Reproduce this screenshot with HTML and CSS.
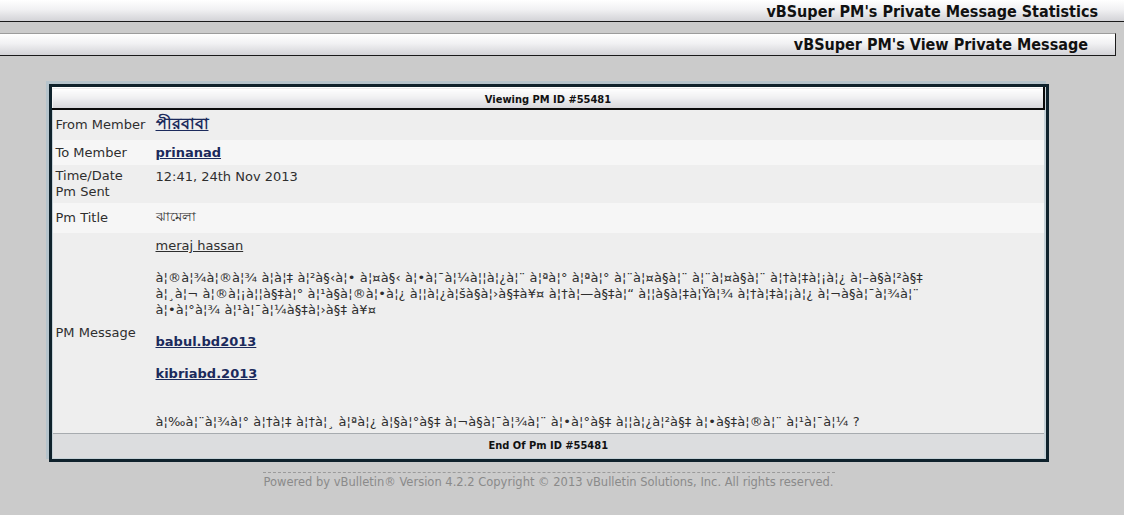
FILE: index.html
```html
<!DOCTYPE html>
<html>
<head>
<meta charset="utf-8">
<title>vBSuper PM's View Private Message</title>
<link rel="stylesheet" href="styles.css">
</head>
<body>
<div class="bar bar-top">vBSuper PM's Private Message Statistics</div>
<div class="bar bar-sub">vBSuper PM's View Private Message</div>
<div class="page">
  <div class="pm-box">
    <table class="pm">
      <thead>
        <tr><th colspan="2" class="pm-head">Viewing PM ID #55481</th></tr>
      </thead>
      <tbody>
        <tr class="row-a r-from">
          <td class="lbl">From Member</td>
          <td class="val"><a class="member big" href="#">পীরবাবা</a></td>
        </tr>
        <tr class="row-b r-to">
          <td class="lbl">To Member</td>
          <td class="val"><a class="member" href="#">prinanad</a></td>
        </tr>
        <tr class="row-a r-time">
          <td class="lbl">Time/Date<br>Pm Sent</td>
          <td class="val">12:41, 24th Nov 2013</td>
        </tr>
        <tr class="row-b r-title">
          <td class="lbl">Pm Title</td>
          <td class="val bn">ঝামেলা</td>
        </tr>
        <tr class="row-a r-msg">
          <td class="lbl">PM Message</td>
          <td class="val msg"><a class="quote-name" href="#">meraj hassan</a><br><br>à¦®à¦¾à¦®à¦¾ à¦à¦‡ à¦²à§‹à¦• à¦¤à§‹ à¦•à¦¯à¦¼à¦¦à¦¿à¦¨ à¦ªà¦° à¦ªà¦° à¦¨à¦¤à§à¦¨ à¦¨à¦¤à§à¦¨ à¦†à¦‡à¦¡à¦¿ à¦–à§à¦²à§‡<br>à¦¸à¦¬ à¦®à¦¡à¦¦à§‡à¦° à¦¹à§à¦®à¦•à¦¿ à¦¦à¦¿à¦šà§à¦›à§‡à¥¤ à¦†à¦—à§‡à¦“ à¦¦à§à¦‡à¦Ÿà¦¾ à¦†à¦‡à¦¡à¦¿ à¦¬à§à¦¯à¦¾à¦¨<br>à¦•à¦°à¦¾ à¦¹à¦¯à¦¼à§‡à¦›à§‡ à¥¤<br><br><a class="member" href="#">babul.bd2013</a><br><br><a class="member" href="#">kibriabd.2013</a><br><br><br>à¦‰à¦¨à¦¾à¦° à¦†à¦‡ à¦†à¦¸ à¦ªà¦¿ à¦§à¦°à§‡ à¦¬à§à¦¯à¦¾à¦¨ à¦•à¦°à§‡ à¦¦à¦¿à¦²à§‡ à¦•à§‡à¦®à¦¨ à¦¹à¦¯à¦¼ ?</td>
        </tr>
      </tbody>
      <tfoot>
        <tr><td colspan="2" class="pm-foot">End Of Pm ID #55481</td></tr>
      </tfoot>
    </table>
  </div>
  <div class="copyright">Powered by vBulletin® Version 4.2.2 Copyright © 2013 vBulletin Solutions, Inc. All rights reserved.</div>
</div>
</body>
</html>
```

FILE: styles.css
```css
html, body {
  margin: 0;
  padding: 0;
}

body {
  background: #cbcbcb;
  font-family: "DejaVu Sans", Verdana, sans-serif;
  font-size: 13px;
  color: #2e2e2e;
}

.bar {
  box-sizing: border-box;
  height: 22px;
  line-height: 23px;
  text-align: right;
  font-family: "DejaVu Sans Condensed", "DejaVu Sans", sans-serif;
  font-stretch: condensed;
  font-weight: bold;
  font-size: 16px;
  color: #111;
  background: linear-gradient(#ffffff, #f1f1f3 45%, #d3d3d7);
}

.bar-top {
  width: 100%;
  border-bottom: 1px solid #1a1a1a;
  padding-right: 26px;
}

.bar-sub {
  width: 1116px;
  margin-top: 11px;
  height: 23px;
  line-height: 22px;
  border-top: 1px solid #9c9c9c;
  border-bottom: 1px solid #1a1a1a;
  border-right: 1px solid #1a1a1a;
  padding-right: 27px;
}

.page {
  width: 1097px;
  padding-top: 28px;
}

.pm-box {
  box-sizing: border-box;
  width: 1000px;
  margin-left: 49px;
  border: 3px solid #0f222c;
  box-shadow: -3px -3px 0 #b6c4cc;
  background: #c6d2d8;
  padding: 0 1px 1px 0;
}

.pm {
  width: 100%;
  border-collapse: collapse;
  border-spacing: 0;
}

.pm-head {
  height: 18px;
  padding: 2px 0 0;
  border-top: 1px solid #ffffff;
  border-left: 1px solid #f4f4f4;
  border-right: 2px solid #0b0b0b;
  border-bottom: 2px solid #0b0b0b;
  background: linear-gradient(#ffffff, #f0f0f2 45%, #d6d6da);
  font-family: "DejaVu Sans Condensed", "DejaVu Sans", sans-serif;
  font-stretch: condensed;
  font-size: 11px;
  font-weight: bold;
  color: #111;
  text-align: center;
  vertical-align: middle;
}

.pm td {
  padding: 4px 3px;
  line-height: 16px;
}

.row-a { background: #eeeeee; }
.row-b { background: #f6f6f6; }

.r-from { height: 31px; }
.r-to { height: 24px; }
.r-time { height: 38px; }
.r-title { height: 30px; }
.r-msg { height: 200px; }

.r-time td.lbl {
  padding-top: 3px;
  padding-bottom: 3px;
}

.pm td.lbl {
  width: 94px;
  vertical-align: middle;
  color: #2e2e2e;
}

.pm td.val {
  vertical-align: top;
  color: #2e2e2e;
}

.r-from td.val { padding-top: 4px; }
.r-to td.val { padding-top: 5px; }
.r-title td.val { padding-top: 6px; }

.pm td.msg {
  padding-top: 5px;
  padding-bottom: 3px;
  letter-spacing: 0.1px;
}

.member {
  color: #1b2a5c;
  font-weight: bold;
  text-decoration: underline;
  letter-spacing: 0;
}

.member.big {
  font-size: 16px;
  line-height: 20px;
}

.quote-name {
  color: #2e2e2e;
  text-decoration: underline;
  letter-spacing: 0;
}

.pm-foot {
  height: 14px;
  background: #dcdddf;
  border-top: 1px solid #a7abaf;
  font-family: "DejaVu Sans Condensed", "DejaVu Sans", sans-serif;
  font-stretch: condensed;
  font-size: 11px;
  font-weight: bold;
  color: #111;
  text-align: center;
}

.copyright {
  width: 572px;
  margin: 10px auto 0;
  border-top: 1px dashed #9a9a9a;
  padding-top: 2px;
  text-align: center;
  font-size: 11.5px;
  color: #8a8a8a;
  white-space: nowrap;
}
```
